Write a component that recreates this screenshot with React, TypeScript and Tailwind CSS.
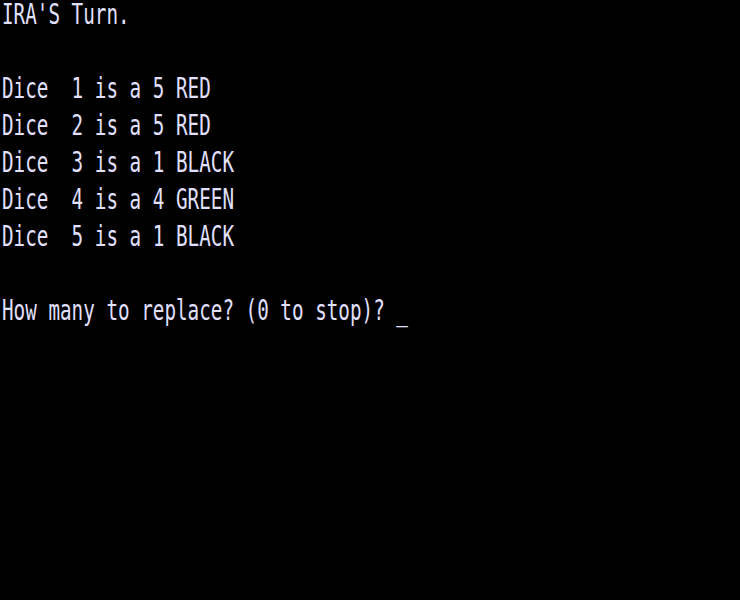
const lines = [
  "IRA'S Turn.",
  "",
  "Dice  1 is a 5 RED",
  "Dice  2 is a 5 RED",
  "Dice  3 is a 1 BLACK",
  "Dice  4 is a 4 GREEN",
  "Dice  5 is a 1 BLACK",
  "",
  "How many to replace? (0 to stop)? _",
];

export default function App() {
  return (
    <div className="h-[600px] w-full overflow-hidden bg-black pl-[2px] text-[#e2e0ff]">
      <div className="whitespace-pre text-[19.27px] leading-none [font-family:'DejaVu_Sans_Mono',monospace]">
        {lines.map((line, i) => (
          <div key={i} className="h-[37px]">
            <span className="inline-block origin-top scale-y-[1.5]">{line}</span>
          </div>
        ))}
      </div>
    </div>
  );
}
